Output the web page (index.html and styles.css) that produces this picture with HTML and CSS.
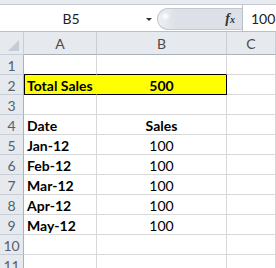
FILE: index.html
```html
<!DOCTYPE html>
<html>
<head>
<meta charset="utf-8">
<link rel="stylesheet" href="styles.css">
</head>
<body>
<div class="app">
  <div class="ribbon-edge"></div>
  <div class="formula-bar">
    <div class="name-box">
      <span class="name-text">B5</span>
      <span class="drop-arrow"></span>
    </div>
    <div class="fx-area">
      <span class="dimple"></span>
      <span class="fx"><i>f</i><i class="fx-x">x</i></span>
    </div>
    <div class="formula-input">100</div>
  </div>
  <div class="sheet">
    <div class="corner"><svg width="13" height="13" viewBox="0 0 13 13"><polygon points="12,1 12,12 1,12" fill="#c6ccd4"/></svg></div>
    <div class="col-head">A</div>
    <div class="col-head">B</div>
    <div class="col-head">C</div>

    <div class="row-head">1</div><div class="cell hl-above"></div><div class="cell hl-above"></div><div class="cell"></div>
    <div class="row-head">2</div><div class="cell bold hl hl-left">Total Sales</div><div class="cell bold center hl hl-right">500</div><div class="cell"></div>
    <div class="row-head">3</div><div class="cell"></div><div class="cell"></div><div class="cell"></div>
    <div class="row-head">4</div><div class="cell bold">Date</div><div class="cell bold center">Sales</div><div class="cell"></div>
    <div class="row-head">5</div><div class="cell bold">Jan-12</div><div class="cell center">100</div><div class="cell"></div>
    <div class="row-head">6</div><div class="cell bold">Feb-12</div><div class="cell center">100</div><div class="cell"></div>
    <div class="row-head">7</div><div class="cell bold">Mar-12</div><div class="cell center">100</div><div class="cell"></div>
    <div class="row-head">8</div><div class="cell bold">Apr-12</div><div class="cell center">100</div><div class="cell"></div>
    <div class="row-head">9</div><div class="cell bold">May-12</div><div class="cell center">100</div><div class="cell"></div>
    <div class="row-head">10</div><div class="cell"></div><div class="cell"></div><div class="cell"></div>
    <div class="row-head">11</div><div class="cell"></div><div class="cell"></div><div class="cell"></div>
  </div>
</div>
</body>
</html>
```
FILE: styles.css
```css
* { box-sizing: border-box; }
html, body { margin: 0; padding: 0; }
body {
  width: 276px;
  height: 268px;
  overflow: hidden;
  background: #ffffff;
  font-family: Lato, "Open Sans", sans-serif;
  color: #000;
}
.app { width: 276px; }

.ribbon-edge {
  height: 5px;
  background: #e7eaee;
  border-bottom: 1px solid #c3cad3;
}

.formula-bar {
  display: flex;
  height: 26px;
  background: #ffffff;
}
.name-box {
  width: 157px;
  display: flex;
  align-items: center;
}
.name-text {
  width: 140px;
  text-align: center;
  font-size: 14px;
  color: #222;
  padding-left: 2px;
}
.drop-arrow {
  width: 0;
  height: 0;
  margin-left: 6px;
  margin-top: 2px;
  border-left: 3px solid transparent;
  border-right: 3px solid transparent;
  border-top: 3px solid #333;
}
.fx-area {
  width: 85px;
  margin: 3px 0 1px 0;
  border-radius: 11px 0 0 11px;
  background: linear-gradient(90deg, #eef0f3 0px, #dde1e7 18px, #dde1e7 100%);
  border: 1px solid #c3c9d1;
  border-right: none;
  display: flex;
  align-items: center;
  justify-content: space-between;
  padding: 0 7px 0 4px;
}
.dimple {
  width: 8px;
  height: 8px;
  border-radius: 50%;
  background: radial-gradient(circle at 40% 40%, #ffffff 0%, #eef1f4 50%, #d5dbe2 100%);
  margin-bottom: 5px;
}
.fx {
  font-family: "Liberation Serif", serif;
  font-size: 14px;
  color: #333;
  font-weight: bold;
}
.fx-x { font-size: 10px; }
.formula-input {
  flex: 1;
  border-left: 1px solid #b7bfc9;
  font-size: 14px;
  color: #222;
  display: flex;
  align-items: center;
  padding-left: 8px;
}

.sheet {
  display: grid;
  grid-template-columns: 24px 73px 130px 1fr;
  grid-template-rows: 23px repeat(11, 20px);
  border-top: 1px solid #b6bec8;
}
.corner, .col-head, .row-head {
  background: #e6eaef;
  border-right: 1px solid #c8ced6;
  border-bottom: 1px solid #c8ced6;
  color: #4a4a4a;
  font-size: 14px;
}
.corner {
  display: flex;
  align-items: flex-end;
  justify-content: flex-end;
  padding: 0 3px 2px 0;
}
.col-head {
  display: flex;
  align-items: center;
  justify-content: center;
  border-bottom-color: #a9b1bc;
}
.row-head {
  display: flex;
  align-items: center;
  justify-content: center;
  border-right-color: #a9b1bc;
  color: #55606b;
  padding-top: 1px;
}
.cell {
  border-right: 1px solid #d9d9d9;
  border-bottom: 1px solid #d9d9d9;
  font-size: 14px;
  line-height: 19px;
  padding: 1px 0 0 3px;
  white-space: nowrap;
  overflow: hidden;
}
.bold { font-weight: bold; }
.center { text-align: center; padding-left: 0; }
.hl { background: #ffff00; border-bottom-color: #000; }
.hl-left { border-right-color: #ffff00; border-left: 1px solid #000; padding-left: 2px; }
.hl-right { border-right-color: #000; }
.hl-above { border-bottom-color: #000; }
```
